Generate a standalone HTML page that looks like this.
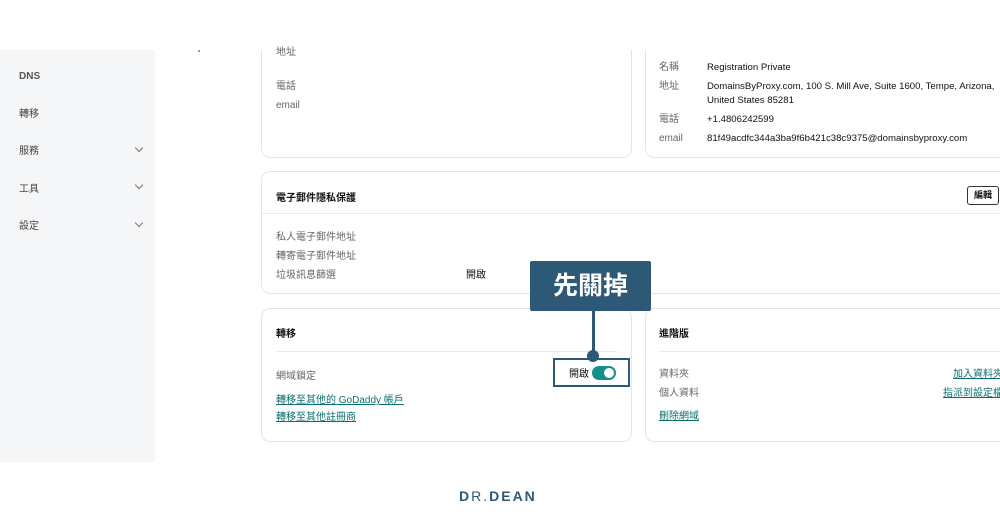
<!DOCTYPE html>
<html><head><meta charset="utf-8"><style>
*{box-sizing:border-box;margin:0;padding:0}
body{width:1000px;height:521px;position:relative;overflow:hidden;background:#fff;font-family:"Liberation Sans","Noto Sans CJK TC",sans-serif;font-size:10px;line-height:20px;color:#111}
.a{position:absolute;white-space:nowrap}
.a:not(.box){margin-top:3px}
.side{position:absolute;left:0;top:50px;width:155px;height:412px;background:#f5f6f8}
.side div{position:absolute;left:19px;color:#444;font-size:10px;margin-top:2px}
.chev{position:absolute;left:136px;width:6px;height:6px;border-right:1px solid #777;border-bottom:1px solid #777;transform:rotate(45deg)}
.card{position:absolute;border:1px solid #e3e5e8;border-radius:9px;background:#fff}
.g{color:#666}
.lnk{color:#0a6e6e;text-decoration:underline}
.hr{position:absolute;height:1px;background:#e6e8ea}
.e{font-size:9.6px}
</style></head><body>
<div class="side">
<div style="top:15px;font-weight:bold;color:#555">DNS</div>
<div style="top:53px">轉移</div>
<div style="top:90px">服務</div>
<div style="top:128px">工具</div>
<div style="top:165px">設定</div>
</div>
<div class="chev" style="top:145px"></div>
<div class="chev" style="top:182px"></div>
<div class="chev" style="top:220px"></div>
<div class="a box" style="left:198px;top:50px;width:2px;height:2px;background:#999"></div>

<div class="card" style="left:261px;top:20px;width:371px;height:138px"></div>
<div class="card" style="left:645px;top:20px;width:380px;height:138px"></div>
<div style="position:absolute;left:0;top:0;width:1000px;height:50px;background:#fff"></div>
<div class="a g" style="left:276px;top:40px">地址</div>
<div class="a g" style="left:276px;top:74px">電話</div>
<div class="a g" style="left:276px;top:93px">email</div>
<div class="a g" style="left:659px;top:55px">名稱</div>
<div class="a e" style="left:707px;top:55px">Registration Private</div>
<div class="a g" style="left:659px;top:74px">地址</div>
<div class="a e" style="left:707px;top:74px">DomainsByProxy.com, 100 S. Mill Ave, Suite 1600, Tempe, Arizona,</div>
<div class="a e" style="left:707px;top:88px">United States 85281</div>
<div class="a g" style="left:659px;top:107px">電話</div>
<div class="a e" style="left:707px;top:107px">+1.4806242599</div>
<div class="a g" style="left:659px;top:126px">email</div>
<div class="a e" style="left:707px;top:126px">81f49acdfc344a3ba9f6b421c38c9375@domainsbyproxy.com</div>

<div class="card" style="left:261px;top:171px;width:760px;height:123px"></div>
<div class="a" style="left:276px;top:186px;font-weight:bold">電子郵件隱私保護</div>
<div class="hr" style="left:261px;top:213px;width:739px"></div>
<div class="a box" style="left:967px;top:186px;width:32px;height:19px;border:1px solid #333;border-radius:3px;font-size:9px;font-weight:bold;text-align:center;line-height:17px">編輯</div>
<div class="a g" style="left:276px;top:225px">私人電子郵件地址</div>
<div class="a g" style="left:276px;top:244px">轉寄電子郵件地址</div>
<div class="a g" style="left:276px;top:263px">垃圾訊息篩選</div>
<div class="a" style="left:466px;top:263px">開啟</div>

<div class="card" style="left:261px;top:308px;width:371px;height:134px"></div>
<div class="a" style="left:276px;top:322px;font-weight:bold">轉移</div>
<div class="hr" style="left:276px;top:351px;width:341px"></div>
<div class="a g" style="left:276px;top:364px">網域鎖定</div>
<div class="a lnk" style="left:276px;top:388px">轉移至其他的 GoDaddy 帳戶</div>
<div class="a lnk" style="left:276px;top:405px">轉移至其他註冊商</div>
<div class="a" style="left:569px;top:362px">開啟</div>
<div class="a box" style="left:592px;top:366px;width:24px;height:14px;border-radius:7px;background:#14908c"></div>
<div class="a box" style="left:604px;top:368px;width:10px;height:10px;border-radius:5px;background:#fff"></div>
<div class="a box" style="left:553px;top:358px;width:77px;height:29px;border:2px solid #2d5876"></div>

<div class="card" style="left:645px;top:308px;width:380px;height:134px"></div>
<div class="a" style="left:659px;top:322px;font-weight:bold">進階版</div>
<div class="hr" style="left:659px;top:351px;width:341px"></div>
<div class="a g" style="left:659px;top:362px">資料夾</div>
<div class="a g" style="left:659px;top:381px">個人資料</div>
<div class="a lnk" style="left:659px;top:404px">刪除網域</div>
<div class="a lnk" style="left:953px;top:362px">加入資料夾</div>
<div class="a lnk" style="left:943px;top:381px">指派到設定檔</div>

<div class="a box" style="left:530px;top:261px;width:121px;height:50px;background:#2d5876;border-radius:2px;color:#fff;font-size:25px;font-weight:bold;text-align:center;line-height:50px">先關掉</div>
<div class="a box" style="left:592px;top:311px;width:3px;height:45px;background:#2d5876"></div>
<div class="a box" style="left:587px;top:350px;width:12px;height:12px;border-radius:6px;background:#2d5876"></div>

<div style="position:absolute;left:0;top:462px;width:1000px;height:59px;background:#fff"></div>
<div class="a box" style="left:459px;top:488px;font-size:14px;line-height:16px;color:#2d5876;letter-spacing:2px;font-weight:bold">D<span style="font-weight:normal">R.</span>DEAN</div>
</body></html>
